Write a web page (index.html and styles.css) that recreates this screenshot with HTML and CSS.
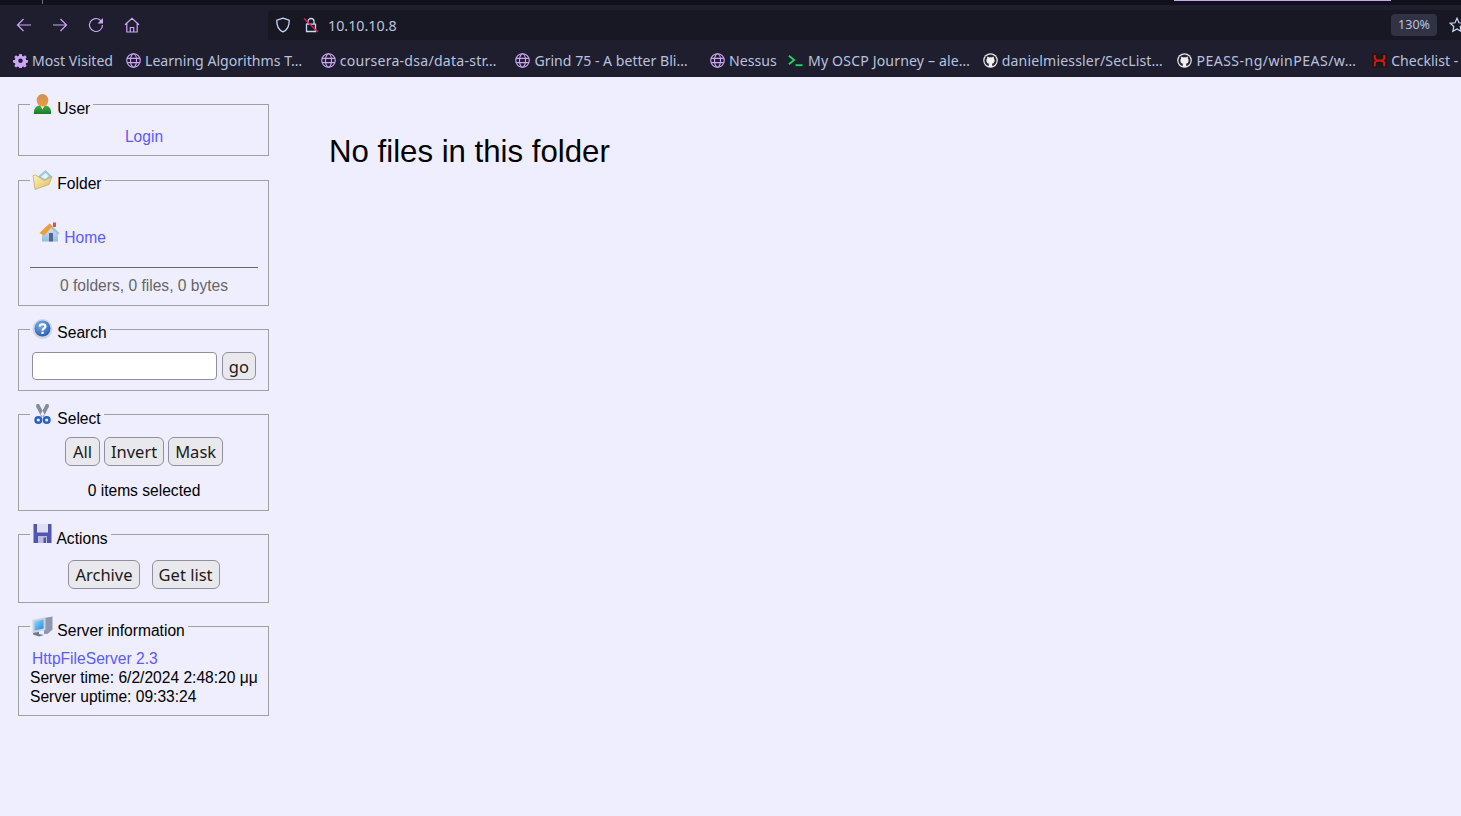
FILE: index.html
```html
<!DOCTYPE html>
<html lang="en">
<head>
<meta charset="utf-8">
<title>HFS /</title>
<link rel="stylesheet" href="styles.css">
</head>
<body>
<svg class="defs" width="0" height="0" aria-hidden="true">
  <defs>
    <symbol id="globe" viewBox="0 0 16 16"><g fill="none" stroke="#cba6f7" stroke-width="1.2"><circle cx="8" cy="8" r="7.2"/><ellipse cx="8" cy="8" rx="3.2" ry="7.2"/><path d="M1.200 5.700h13.600M1.200 10.300h13.600"/></g></symbol>
    <symbol id="github" viewBox="0 0 16 16"><circle cx="8" cy="8" r="7.8" fill="#e8e8ee"/><circle cx="8" cy="8" r="6.500" fill="#26262e"/><path fill="#f0f0f4" d="M4.600 3.800l2 .9c.9-.2 1.900-.2 2.800 0l2-.9c.3.8.3 1.500.2 2.100.5.600.8 1.300.8 2.100 0 2.200-1.300 3.200-3 3.500.3.300.5.700.5 1.300V15H6.100v-2.200c0-.6.200-1 .5-1.300-1.700-.3-3-1.300-3-3.500 0-.8.300-1.500.8-2.100-.1-.6-.1-1.300.2-2.100z"/></symbol>
  </defs>
</svg>
<header class="chrome">
  <div class="tabstrip"><span class="tabsep"></span><span class="tabline"></span></div>
  <div class="toolbar">
    <nav class="navbtns">
      <svg class="navicon" viewBox="0 0 16 16"><path d="M15 8H1.500M7.500 2 1.500 8l6 6"/></svg>
      <svg class="navicon" viewBox="0 0 16 16"><path d="M1 8h13.500M8.500 2l6 6-6 6"/></svg>
      <svg class="navicon" viewBox="0 0 16 16"><path d="M14.500 8A6.500 6.500 0 1 1 12.500 3.300L14.500 5"/><path class="solid" d="M15 1v5.500H9.500z"/></svg>
      <svg class="navicon" viewBox="0 0 16 16"><path d="M1 7.800 8 1.200l7 6.600M2.800 6.500V15h10.400V6.500M6.300 15v-4.500h3.400V15"/></svg>
    </nav>
    <div class="urlbar">
      <svg class="shield" viewBox="0 0 16 16"><path d="M8 1.200 14.200 3.200c.2 5.800-2 9.800-6.200 11.600C3.800 13 1.600 9 1.800 3.200z"/></svg>
      <svg class="lock" viewBox="0 0 16 16"><path class="lockbody" d="M5 7V4.500a3 3 0 0 1 6 0V7M3.500 7.200h9v7.300h-9z"/><path class="lockslash" d="M1 1.500 15 15"/></svg>
      <span class="urltext">10.10.10.8</span>
      <span class="zoom">130%</span>
      <svg class="star" viewBox="0 0 16 16"><path d="M8 1.300 10 5.800l4.800.5-3.600 3.200 1 4.800L8 11.900l-4.200 2.400 1-4.800L1.200 6.300 6 5.800z"/></svg>
    </div>
  </div>
  <div class="bookmarks">
    <span class="bm bm-first"><svg class="bmicon" viewBox="0 0 16 16"><path fill="#cba6f7" fill-rule="evenodd" d="M6.700 1h2.600l.4 2 1.300.6 1.800-1.100 1.800 1.800-1.100 1.800.6 1.300 2 .4v2.400l-2 .4-.6 1.300 1.100 1.800-1.800 1.800-1.800-1.100-1.300.6-.4 2H6.700l-.4-2-1.300-.6-1.800 1.100-1.800-1.800 1.100-1.800-.6-1.300-2-.4V7.800l2-.4.6-1.300-1.100-1.800 1.800-1.800 1.800 1.100L6.300 3zM8 5.800a2.400 2.400 0 1 0 0 4.800 2.400 2.400 0 0 0 0-4.800z"/></svg><span>Most Visited</span></span>
    <span class="bm bm-long"><svg class="bmicon"><use href="#globe"/></svg><span>Learning Algorithms T…</span></span>
    <span class="bm bm-long bm-s2"><svg class="bmicon"><use href="#globe"/></svg><span>coursera-dsa/data-str…</span></span>
    <span class="bm bm-long"><svg class="bmicon"><use href="#globe"/></svg><span>Grind 75 - A better Bli…</span></span>
    <span class="bm bm-short"><svg class="bmicon"><use href="#globe"/></svg><span>Nessus</span></span>
    <span class="bm bm-long bm-wide bm-s1"><svg class="bmicon" viewBox="0 0 16 16"><path fill="none" stroke="#1fd35f" stroke-width="2" d="M1 3l5.500 4.500L1 12"/><path fill="none" stroke="#1fd35f" stroke-width="2" d="M8 13h7.500"/></svg><span>My OSCP Journey – ale…</span></span>
    <span class="bm bm-long bm-s1"><svg class="bmicon"><use href="#github"/></svg><span>danielmiessler/SecList…</span></span>
    <span class="bm bm-long bm-s3"><svg class="bmicon"><use href="#github"/></svg><span>PEASS-ng/winPEAS/w…</span></span>
    <span class="bm bm-clip"><svg class="bmicon" viewBox="0 0 16 16"><rect width="16" height="16" fill="#1a1a1e"/><path fill="none" stroke="#e0140f" stroke-width="2" d="M3 2v3c0 2 1.500 3 5 3s5 1 5 3v3M13 2v3c0 2-1.500 3-5 3s-5 1-5 3v3"/></svg><span>Checklist - </span></span>
  </div>
</header>
<main class="page">
  <aside class="panels">
    <fieldset class="box box-user">
      <legend><svg class="ico" viewBox="0 0 21 21"><defs><linearGradient id="uh" x1="0" y1="0" x2="0" y2="1"><stop offset="0" stop-color="#c9925a"/><stop offset="1" stop-color="#f59a3a"/></linearGradient><linearGradient id="ub" x1="0" y1="0" x2="0" y2="1"><stop offset="0" stop-color="#3fae48"/><stop offset="1" stop-color="#1c7a2c"/></linearGradient></defs><path fill="url(#ub)" d="M2 20c-.5-5 1.500-7.500 5-8.500h7c3.500 1 5.500 3.500 5 8.500z"/><path fill="#f4f6f0" d="M8.500 12h4l-2 3.500z"/><ellipse cx="10.500" cy="6.300" rx="5.800" ry="6.300" fill="url(#uh)"/></svg> User</legend>
      <div class="center"><a href="#">Login</a></div>
    </fieldset>
    <fieldset class="box box-folder">
      <legend class="legend-up"><svg class="ico" viewBox="0 0 21 21"><defs><linearGradient id="fo" x1="0" y1="0" x2="1" y2="1"><stop offset="0" stop-color="#fff4c0"/><stop offset="1" stop-color="#dcb95e"/></linearGradient></defs><path fill="#9cc9ec" stroke="#7fa9cc" stroke-width=".6" d="M5 8 13.500.500l6 6-5 6.500z"/><path fill="#e6f3fb" d="M9 7l4.500-4 3 3-3 3z"/><path fill="url(#fo)" stroke="#c4a44c" stroke-width=".7" d="M1 5.500l2.500-.5 9 5.500 7.500-4-3 8L3 19.500z"/></svg> Folder</legend>
      <div class="crumb"><svg class="ico" viewBox="0 0 21 21"><defs><linearGradient id="hw" x1="0" y1="0" x2="0" y2="1"><stop offset="0" stop-color="#dfeaf4"/><stop offset="1" stop-color="#8dbde0"/></linearGradient></defs><path fill="url(#hw)" d="M3 10l8-6 8 6v9.500H3z"/><path fill="#a9c0d4" d="M10.500 1.500 20.500 11l-1.500 2-8.500-8z"/><path fill="#f59c34" d="M.500 11 10.500 1.500l3 3L5 13.500z"/><rect x="14" y="0.500" width="3" height="4.500" fill="#d9534a"/><rect x="10" y="11" width="4" height="8.500" fill="#56648f"/></svg> <a href="#">Home</a></div>
      <hr class="rule">
      <div class="center stats">0 folders, 0 files, 0 bytes</div>
    </fieldset>
    <fieldset class="box box-search">
      <legend class="legend-up"><svg class="ico" viewBox="0 0 21 21"><defs><radialGradient id="q" cx=".4" cy=".3" r=".8"><stop offset="0" stop-color="#7fb0ee"/><stop offset="1" stop-color="#1e56b0"/></radialGradient></defs><circle cx="10.500" cy="10" r="10" fill="#cfd5e0"/><circle cx="10.500" cy="9.500" r="8" fill="url(#q)"/><path fill="none" stroke="#fff" stroke-width="2.200" d="M7.800 7.500c.2-3 5.600-3 5.600 0 0 2-2.900 2-2.900 4.300"/><rect x="9.400" y="12.800" width="2.300" height="2.200" fill="#fff"/></svg> Search</legend>
      <form class="row-search"><input class="field" type="text"><button class="btn" type="button">go</button></form>
    </fieldset>
    <fieldset class="box box-select">
      <legend><svg class="ico" viewBox="0 0 21 21"><path fill="#868d99" d="M4.500 0 7 0 12.500 10.500 9.500 13 4 2.500zM16.500 0 14 0 8.500 10.500 11.500 13 17 2.500z"/><g fill="none" stroke="#2461c2" stroke-width="2.400"><circle cx="6.300" cy="16" r="2.800"/><circle cx="14.700" cy="16" r="2.800"/></g></svg> Select</legend>
      <div class="btnrow"><button class="btn" type="button">All</button><button class="btn" type="button">Invert</button><button class="btn" type="button">Mask</button></div>
      <div class="center selected">0 items selected</div>
    </fieldset>
    <fieldset class="box box-actions">
      <legend><svg class="ico" viewBox="0 0 21 21"><path fill="#5157b0" d="M1.500 0h18v19h-18z"/><path fill="#dfe1f2" d="M5 0h11v8.500H5z"/><path fill="#b9bce0" d="M6 12h9v7H6z"/><path fill="#5157b0" d="M11.500 13.500h2.500V19h-2.500z"/></svg> Actions</legend>
      <div class="btnrow btnrow-wide"><button class="btn" type="button">Archive</button><button class="btn" type="button">Get list</button></div>
    </fieldset>
    <fieldset class="box box-server">
      <legend><svg class="ico" viewBox="0 0 21 21"><defs><linearGradient id="sc" x1="0" y1="0" x2="1" y2="1"><stop offset="0" stop-color="#8fe0fb"/><stop offset="1" stop-color="#1f86dc"/></linearGradient></defs><path fill="#8f97b0" d="M12 2l8.500-1.500v13l-5 4.500H12z"/><path fill="#cdd3e0" d="M.500 4l13-3v13l-13 3z"/><path fill="url(#sc)" d="M2.500 5.500l9-2v9l-9 2z"/><path fill="#6f7897" d="M1 17l6-1.200v2.200l5 1-5 1.500-6-2z"/></svg> Server information</legend>
      <div class="srv-link"><a href="#">HttpFileServer 2.3</a></div>
      <div>Server time: 6/2/2024 2:48:20 μμ</div>
      <div>Server uptime: 09:33:24</div>
    </fieldset>
  </aside>
  <section class="content"><h2 class="empty">No files in this folder</h2></section>
</main>
</body>
</html>
```
FILE: styles.css
```css
* { box-sizing: border-box; }
html, body { margin: 0; height: 100%; overflow: hidden; }
body { display: flex; flex-direction: column; background: #eeeeff; font-family: "Liberation Sans", Arial, sans-serif; font-size: 15.6px; line-height: 19px; color: #000; }
.defs { position: absolute; }
.chrome { flex: none; height: 77px; font-family: "Noto Sans", sans-serif; overflow: hidden; }
.tabstrip { height: 5px; background: #11111b; position: relative; }
.tabsep { position: absolute; left: 42px; top: 0; width: 1px; height: 4px; background: #6c7086; }
.tabline { position: absolute; left: 1174px; top: 0; width: 217px; height: 1px; background: #cba6f7; }
.toolbar { height: 35px; background: #1e1e2e; display: flex; align-items: stretch; }
.navbtns { width: 268px; flex: none; display: flex; gap: 20px; padding: 4px 0 0 16px; align-items: center; }
.navicon { width: 16px; height: 16px; fill: none; stroke: #cba6f7; stroke-width: 1.200; }
.navicon .solid { fill: #cba6f7; stroke: none; }
.urlbar { flex: 1; margin-top: 5px; background: #181825; border-radius: 4px 0 0 0; display: flex; align-items: center; padding-left: 7px; color: #bac2de; white-space: nowrap; }
.shield { width: 16px; height: 16px; flex: none; fill: none; stroke: #cdd6f4; stroke-width: 1.300; }
.lock { width: 16px; height: 16px; flex: none; margin-left: 12px; fill: none; }
.lockbody { stroke: #cdd6f4; stroke-width: 1.300; }
.lockslash { stroke: #e0254e; stroke-width: 1.300; }
.urltext { margin-left: 9px; font-size: 14.300px; }
.zoom { margin-left: auto; width: 46px; height: 22px; background: #313244; border-radius: 4px; font-size: 12.500px; line-height: 22px; text-align: center; }
.star { width: 16px; height: 16px; flex: none; margin: 0 -4px 0 12px; fill: none; stroke: #cdd6f4; stroke-width: 1.200; }
.bookmarks { height: 37px; background: #1e1e2e; display: flex; align-items: center; padding: 4px 0 0 13px; font-size: 14.100px; color: #bac2de; white-space: nowrap; }
.bm { display: flex; align-items: center; gap: 4px; flex: none; overflow: hidden; }
.bm-first { width: 113px; gap: 4px; }
.bm-long { width: 194.700px; }
.bm-wide { gap: 5px; }
.bm-s1 { letter-spacing: .14px; }
.bm-s2 { letter-spacing: .24px; }
.bm-s3 { letter-spacing: .45px; }
.bm-short { width: 78px; }
.bm-clip { width: 100px; gap: 4px; }
.bmicon { width: 15px; height: 15px; flex: none; }
.page { flex: 1; display: flex; align-items: flex-start; min-height: 0; }
.panels { width: 251px; margin: 12px 0 0 18px; flex: none; display: flex; flex-direction: column; gap: 8px; }
.box { margin: 0; border: 1px solid #a0a0a0; padding: 8px 10px 9px 11px; min-width: 0; }
.box legend { height: 30px; padding: 5px 3px 1px 2px; margin: 0; line-height: 19px; white-space: nowrap; }
.ico { width: 21px; height: 21px; vertical-align: baseline; filter: blur(.3px); }
.box legend .ico { vertical-align: -1px; }
.box legend.legend-up .ico { vertical-align: -2px; }
a { color: #5a5aff; text-decoration: none; }
.center { text-align: center; }
.box-user { margin-bottom: 1px; }
.box-folder { padding-top: 27px; padding-bottom: 10px; }
.crumb { padding-left: 9px; height: 24px; line-height: 24px; }
.rule { margin: 21px 0 0; border: 0; border-top: 1px solid #666; height: 0; }
.stats { color: #666; margin-top: 8px; }
.box-search { padding-bottom: 10px; }
.row-search { display: flex; justify-content: space-between; padding: 0 2px; margin: 0; }
.field { width: 185px; height: 28px; background: #fff; border: 1px solid #8f8f9d; border-radius: 4px; padding: 0; }
.btn { height: 29px; min-width: 35px; padding: 0 6px; background: #e9e9ed; border: 1px solid #8f8f9d; border-radius: 6px; font-family: "Noto Sans", sans-serif; font-size: 16.500px; line-height: 27px; color: #1a1a1a; }
.row-search .btn { height: 28px; min-width: 34px; }
.box-select { padding-bottom: 10px; }
.btnrow { display: flex; justify-content: center; gap: 4px; }
.selected { margin-top: 15px; }
.box-actions { padding-top: 11px; padding-bottom: 13px; }
.btnrow-wide { gap: 12px; }
.srv-link { padding-left: 2px; }
.content { padding: 57px 0 0 60px; }
.empty { margin: 0; font-size: 31.200px; line-height: 36px; font-weight: normal; }
```
